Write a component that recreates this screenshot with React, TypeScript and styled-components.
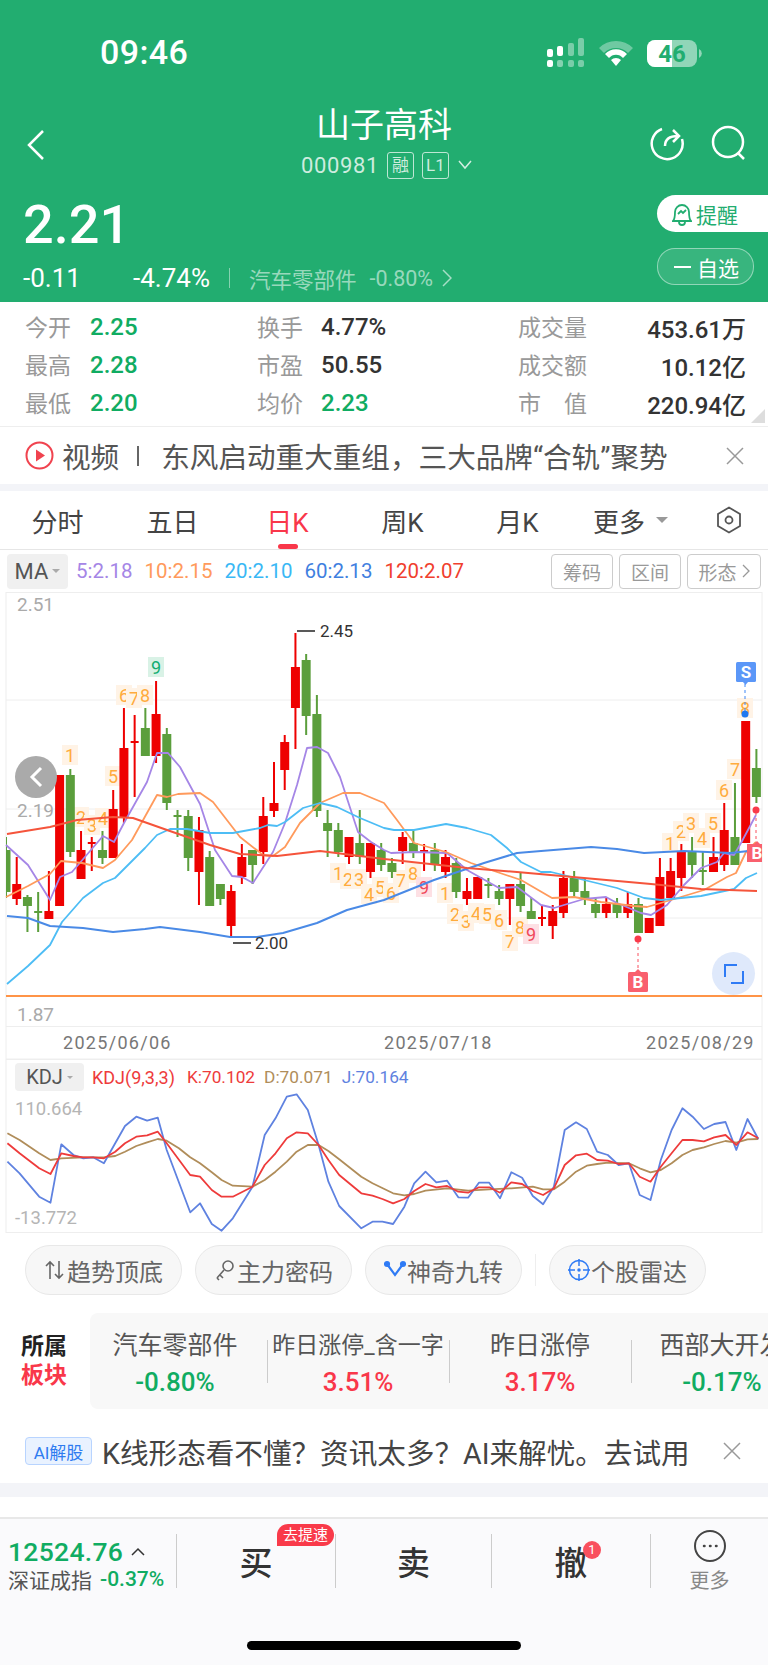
import React from 'react';
import styled, { createGlobalStyle } from 'styled-components';

const GlobalStyle = createGlobalStyle`
    html, body { margin: 0; padding: 0; background: #fff; }
    body { font-family: Roboto, "Noto Sans CJK SC", sans-serif; }
`;

const GREEN = '#22ad70';
const UP = '#f9374a';
const DOWN = '#10ac62';

const Page = styled.div`
    width: 768px;
    height: 1665px;
    overflow: hidden;
    display: flex;
    flex-direction: column;
    background: #fff;
`;

/* header */
const Header = styled.header`
    height: 302px;
    flex: none;
    background: ${GREEN};
    color: #fff;
`;
const StatusBar = styled.div`
    height: 104px;
    display: flex;
    align-items: center;
    justify-content: space-between;
    padding: 0 66px 0 100px;
`;
const Clock = styled.span`
    font-size: 34px;
    font-weight: 500;
    letter-spacing: 0.4px;
`;
const Nav = styled.div`
    height: 82px;
    display: grid;
    grid-template-columns: 1fr auto 1fr;
    padding: 0 21px 0 27px;
    align-items: center;
`;
const NavIcons = styled.div`
    display: flex;
    gap: 26px;
    justify-content: flex-end;
    margin-top: -4px;
`;
const TitleBlock = styled.div`
    display: flex;
    flex-direction: column;
    align-items: center;
    height: 82px;
`;
const Title = styled.div`
    font-size: 34px;
    line-height: 38px;
    margin: 2px 6px 0 0;
`;
const CodeRow = styled.div`
    display: flex;
    align-items: center;
    gap: 8px;
    margin-top: 6px;
    height: 30px;
    font-size: 22px;
    color: rgba(255, 255, 255, 0.78);
    letter-spacing: 0.6px;
`;
const Tag = styled.span`
    font-size: 17px;
    line-height: 25px;
    height: 25px;
    width: 25px;
    text-align: center;
    border: 1px solid rgba(255, 255, 255, 0.7);
    border-radius: 3px;
    letter-spacing: 0;
`;
const PriceArea = styled.div`
    display: flex;
    justify-content: space-between;
    height: 116px;
`;
const PriceLeft = styled.div`
    padding: 9px 0 0 23px;
`;
const Price = styled.div`
    font-size: 54px;
    line-height: 60px;
    font-weight: 500;
`;
const SubRow = styled.div`
    display: flex;
    align-items: center;
    height: 28px;
    margin-top: 9px;
    font-size: 26px;
`;
const Change = styled.span<{ $w: number }>`
    width: ${p => p.$w}px;
`;
const SubDivider = styled.span`
    width: 1px;
    height: 20px;
    margin: 0 19px;
    background: rgba(255, 255, 255, 0.45);
`;
const SubLink = styled.span`
    display: flex;
    align-items: center;
    font-size: 21.5px;
    color: rgba(255, 255, 255, 0.55);
    gap: 13px;
`;
const PriceButtons = styled.div`
    width: 111px;
    padding-top: 9px;
    display: flex;
    flex-direction: column;
    gap: 16px;
`;
const RemindButton = styled.div`
    height: 37px;
    background: #fff;
    border-radius: 19px 0 0 19px;
    color: ${GREEN};
    font-size: 21px;
    display: flex;
    align-items: center;
    gap: 4px;
    padding-left: 15px;
`;
const WatchButton = styled.div`
    height: 35px;
    border: 1px solid rgba(255, 255, 255, 0.45);
    background: rgba(255, 255, 255, 0.1);
    border-radius: 18px;
    font-size: 21px;
    display: flex;
    align-items: center;
    gap: 6px;
    padding-left: 16px;
    width: 79px;
`;
const Dash = styled.span`
    width: 17px;
    height: 2px;
    background: #fff;
`;

/* quote stats */
const Stats = styled.section`
    position: relative;
    height: 125px;
    flex: none;
    display: grid;
    grid-template-columns: 232px 261px 228px;
    grid-auto-rows: 38px;
    padding: 6px 0 0 25px;
    box-sizing: border-box;
    border-bottom: 1px solid #eee;
`;
const Stat = styled.div`
    display: flex;
    align-items: center;
    font-size: 24px;
`;
const StatLabel = styled.span<{ $w: number; $spread?: boolean }>`
    width: ${p => p.$w}px;
    color: #999;
    font-size: 23px;
    margin-top: -3px;
    display: flex;
    justify-content: ${p => (p.$spread ? 'space-between' : 'flex-start')};
`;
const StatValue = styled.span<{ $color: string; $right?: boolean }>`
    flex: 1;
    color: ${p => p.$color};
    font-weight: 500;
    text-align: ${p => (p.$right ? 'right' : 'left')};
`;
const Corner = styled.span`
    position: absolute;
    right: 3px;
    bottom: 3px;
    border-style: solid;
    border-width: 0 0 14px 14px;
    border-color: transparent transparent #ddd transparent;
`;

/* news banner */
const Banner = styled.div`
    height: 57px;
    flex: none;
    display: flex;
    align-items: center;
    padding: 0 24px 0 25px;
    font-size: 28.6px;
    color: #555;
    white-space: nowrap;
`;
const BannerLabel = styled.span`
    margin-left: 8px;
`;
const BannerText = styled.span`
    flex: 1;
`;
const BannerSep = styled.span`
    width: 2px;
    height: 20px;
    margin: 0 22px 0 18px;
    background: #666;
`;
const Band = styled.div<{ $h: number }>`
    height: ${p => p.$h}px;
    flex: none;
    background: #f3f4f8;
`;

/* period tabs */
const Tabs = styled.nav`
    height: 59px;
    flex: none;
    display: flex;
    align-items: center;
    box-sizing: border-box;
    border-bottom: 1px solid #e6e6e6;
`;
const Tab = styled.div<{ $active?: boolean }>`
    position: relative;
    width: 115px;
    height: 58px;
    display: flex;
    align-items: center;
    justify-content: center;
    font-size: 26px;
    color: ${p => (p.$active ? UP : '#444')};
    &::after {
        content: '';
        display: ${p => (p.$active ? 'block' : 'none')};
        position: absolute;
        left: 50%;
        margin-left: -10px;
        bottom: 0;
        width: 20px;
        height: 5px;
        border-radius: 3px;
        background: ${UP};
    }
`;
const MoreTab = styled(Tab)`
    justify-content: flex-start;
    padding-left: 18px;
    box-sizing: border-box;
    gap: 11px;
`;
const Caret = styled.span<{ $size: number; $color: string }>`
    border-style: solid;
    border-width: ${p => p.$size}px ${p => p.$size}px 0;
    border-color: ${p => p.$color} transparent transparent;
`;
const TabIcon = styled.div`
    margin-left: 26px;
    display: flex;
`;

/* MA legend */
const LegendRow = styled.div`
    height: 42px;
    flex: none;
    display: flex;
    align-items: center;
    padding-left: 7px;
    padding-right: 7px;
    box-sizing: border-box;
`;
const Selector = styled.div<{ $w: number; $h: number; $size: number }>`
    width: ${p => p.$w}px;
    height: ${p => p.$h}px;
    flex: none;
    background: #f0f0f0;
    border-radius: 4px;
    display: flex;
    align-items: center;
    justify-content: center;
    gap: 4px;
    font-size: ${p => p.$size}px;
    color: #555;
`;
const Legend = styled.span<{ $color: string; $gap: number; $size: number }>`
    color: ${p => p.$color};
    font-size: ${p => p.$size}px;
    margin-left: ${p => p.$gap}px;
    white-space: nowrap;
`;
const ToolButtons = styled.div`
    margin-left: auto;
    display: flex;
    gap: 6px;
`;
const ToolButton = styled.div<{ $w: number }>`
    width: ${p => p.$w}px;
    height: 35px;
    box-sizing: border-box;
    border: 1px solid #ccc;
    border-radius: 4px;
    display: flex;
    align-items: center;
    justify-content: center;
    gap: 5px;
    font-size: 19px;
    color: #999;
`;

/* charts */
const ChartWrap = styled.div`
    position: relative;
    height: 467px;
    flex: none;
`;
const ChartSvg = styled.svg`
    display: block;
    font-family: Roboto, sans-serif;
`;
const RoundBack = styled.div`
    position: absolute;
    left: 15px;
    top: 164px;
    width: 42px;
    height: 42px;
    border-radius: 50%;
    background: #aaa;
    display: flex;
    align-items: center;
    justify-content: center;
`;
const RoundExpand = styled.div`
    position: absolute;
    left: 712px;
    top: 360px;
    width: 43px;
    height: 43px;
    border-radius: 50%;
    background: #dfe9fb;
    display: flex;
    align-items: center;
    justify-content: center;
`;
const KdjWrap = styled.div`
    position: relative;
    height: 174px;
    flex: none;
`;
const KdjHead = styled.div`
    position: absolute;
    left: 15px;
    top: 4px;
    display: flex;
    align-items: center;
`;

/* indicator chips */
const Chips = styled.div`
    height: 80px;
    flex: none;
    display: flex;
    align-items: center;
    padding: 0 0 6px 25px;
    box-sizing: border-box;
    gap: 13px;
`;
const Chip = styled.div`
    width: 157px;
    height: 50px;
    box-sizing: border-box;
    background: #f7f7f7;
    border: 1px solid #e8e8e8;
    border-radius: 25px;
    display: flex;
    align-items: center;
    justify-content: center;
    gap: 1px;
    font-size: 24px;
    color: #666;
`;
const ChipDivider = styled.span`
    width: 1px;
    height: 32px;
    background: #eee;
`;

/* sector row */
const SectorRow = styled.div`
    height: 96px;
    flex: none;
    display: flex;
    align-items: center;
`;
const SectorLabel = styled.div`
    width: 90px;
    padding-left: 21px;
    box-sizing: border-box;
    font-size: 23px;
    font-weight: 700;
    line-height: 29px;
    color: #222;
`;
const RedText = styled.div`
    color: ${UP};
`;
const SectorPanel = styled.div`
    flex: 1;
    height: 96px;
    display: flex;
    overflow: hidden;
    background: #f8f8f8;
    border-radius: 8px 0 0 8px;
`;
const SectorItem = styled.div<{ $w: number; $line?: boolean; $inset?: number }>`
    position: relative;
    width: ${p => p.$w}px;
    flex: none;
    display: flex;
    flex-direction: column;
    align-items: center;
    white-space: nowrap;
    padding: 17px ${p => p.$inset || 0}px 0 0;
    box-sizing: border-box;
    &::before {
        content: '';
        display: ${p => (p.$line ? 'block' : 'none')};
        position: absolute;
        left: 0;
        top: 27px;
        width: 1px;
        height: 43px;
        background: #ccc;
    }
`;
const SectorName = styled.div<{ $size: number }>`
    font-size: ${p => p.$size}px;
    line-height: 32px;
    color: #555;
`;
const SectorValue = styled.div<{ $color: string }>`
    font-size: 26px;
    line-height: 30px;
    margin-top: 5px;
    font-weight: 500;
    color: ${p => p.$color};
`;

/* ai tip */
const AiRow = styled.div`
    height: 74px;
    flex: none;
    display: flex;
    align-items: center;
    padding: 10px 27px 0 25px;
    box-sizing: border-box;
`;
const AiBadge = styled.span`
    width: 67px;
    height: 28px;
    flex: none;
    box-sizing: border-box;
    background: #e9f2ff;
    border: 1px solid #b8d4ff;
    border-radius: 4px;
    color: #2f7bf0;
    font-size: 17px;
    display: flex;
    align-items: center;
    justify-content: center;
`;
const AiText = styled.span`
    flex: 1;
    margin-left: 10px;
    font-size: 28.6px;
    color: #444;
    white-space: nowrap;
`;

/* footer */
const Spacer = styled.div`
    height: 20px;
    flex: none;
`;
const Footer = styled.footer`
    flex: 1;
    position: relative;
    background: #fafafc;
    border-top: 2px solid #e8e8e8;
    padding-top: 15px;
`;
const FooterRow = styled.div`
    display: flex;
    height: 54px;
`;
const IndexCell = styled.div`
    width: 176px;
    padding-left: 8px;
    box-sizing: border-box;
    white-space: nowrap;
`;
const IndexValue = styled.div`
    display: flex;
    align-items: center;
    gap: 8px;
    height: 28px;
    margin-top: 3px;
    color: ${DOWN};
    font-size: 26.5px;
    font-weight: 500;
    letter-spacing: 0.3px;
`;
const IndexName = styled.div`
    display: flex;
    align-items: center;
    height: 30px;
    margin-top: -1px;
    gap: 8px;
    font-size: 21px;
    color: #555;
`;
const IndexPct = styled.span`
    color: ${DOWN};
    font-size: 21px;
    font-weight: 500;
`;
const Action = styled.div<{ $w: number }>`
    position: relative;
    width: ${p => p.$w}px;
    border-left: 1px solid #ccc;
    box-sizing: border-box;
    display: flex;
    align-items: center;
    justify-content: center;
    font-size: 33px;
    font-weight: 500;
    color: #333;
`;
const SpeedBadge = styled.span`
    position: absolute;
    left: 100px;
    top: -10px;
    width: 57px;
    height: 22px;
    background: #f93a4a;
    border-radius: 11px 11px 11px 0;
    color: #fff;
    font-size: 15px;
    font-weight: 400;
    text-align: center;
    line-height: 22px;
`;
const CountBadge = styled.span`
    position: absolute;
    left: 91px;
    top: 7px;
    width: 18px;
    height: 18px;
    border-radius: 50%;
    background: #f9505e;
    color: #fff;
    font-size: 13px;
    font-weight: 400;
    text-align: center;
    line-height: 18px;
`;
const MoreCell = styled.div`
    flex: 1;
    border-left: 1px solid #ccc;
    display: flex;
    flex-direction: column;
    align-items: center;
    font-size: 20px;
    color: #888;
    line-height: 26px;
    gap: 6px;
    margin-top: 0;
    & > svg { flex: none; margin-top: -4px; }
`;
const HomeBar = styled.div`
    position: absolute;
    left: 247px;
    bottom: 15px;
    width: 274px;
    height: 9px;
    border-radius: 5px;
    background: #000;
`;

/* chart data, in page pixels */
type Candle = [number, number, number, number, number];
// dir (1 up/red, 0 down/green), wick top, body top, body bottom, wick bottom
const candles: Candle[] = [
    [0, 837, 850, 892, 898], [1, 857, 884, 899, 905], [0, 895, 897, 906, 932], [0, 892, 911, 913, 932], [1, 871, 911, 919, 919],
    [1, 775, 775, 906, 906], [0, 769, 775, 852, 857], [1, 831, 850, 879, 879], [1, 837, 842, 844, 871], [0, 831, 850, 858, 864],
    [1, 790, 809, 858, 858], [1, 708, 748, 818, 823], [1, 715, 741, 743, 797], [0, 708, 728, 756, 756], [1, 681, 714, 756, 763],
    [0, 728, 734, 803, 810], [0, 810, 815, 817, 837], [0, 810, 816, 858, 871], [1, 817, 830, 872, 905], [0, 851, 857, 906, 906],
    [0, 884, 884, 899, 905], [1, 885, 891, 926, 938], [1, 844, 857, 877, 884], [0, 850, 850, 865, 884], [1, 797, 816, 852, 864],
    [1, 762, 803, 811, 817], [1, 735, 742, 770, 790], [1, 633, 667, 708, 749], [0, 654, 660, 716, 735], [0, 695, 714, 811, 817],
    [0, 810, 823, 831, 857], [0, 823, 830, 852, 857], [1, 837, 837, 857, 864], [0, 810, 843, 857, 864], [1, 843, 843, 872, 878],
    [0, 843, 850, 865, 871], [0, 858, 863, 872, 878], [1, 832, 837, 851, 864], [0, 831, 843, 852, 858], [1, 844, 850, 852, 871],
    [0, 843, 850, 864, 871], [1, 850, 857, 872, 878], [0, 858, 863, 892, 898], [1, 878, 891, 899, 905], [1, 877, 877, 899, 899],
    [0, 878, 884, 886, 898], [0, 885, 891, 899, 905], [1, 884, 884, 899, 925], [0, 872, 884, 906, 912], [0, 898, 911, 919, 919],
    [1, 905, 917, 919, 926], [1, 905, 911, 926, 939], [1, 871, 878, 913, 918], [0, 871, 878, 892, 898], [0, 878, 891, 898, 905],
    [0, 898, 904, 913, 918], [1, 898, 904, 913, 918], [0, 898, 904, 913, 918], [1, 892, 904, 913, 918], [0, 898, 904, 933, 933],
    [1, 918, 918, 933, 933], [1, 858, 877, 926, 926], [1, 858, 871, 898, 898], [1, 844, 851, 878, 891], [0, 837, 851, 865, 878],
    [0, 851, 870, 872, 885], [1, 837, 857, 872, 872], [1, 803, 830, 865, 871], [0, 783, 837, 865, 865], [1, 721, 721, 843, 843],
    [0, 749, 768, 797, 803],
];

const ma5 = '6,845 28,865 50,900 60,877 72,872 103,836 114,842 124,823 147,782 157,753 168,753 180,767 200,804 215,850 232,876 242,877 253,883 273,852 285,823 297,785 307,748 317,747 328,753 340,777 358,832 371,842 384,850 391,853 414,852 447,853 467,870 499,888 517,887 541,905 554,908 584,899 606,897 617,903 641,913 651,915 667,905 684,885 701,868 717,862 724,853 734,855 741,843 756,815';
const ma10 = '6,897 28,886 50,874 61,861 82,863 103,868 115,860 132,840 157,795 167,797 178,794 200,793 213,802 240,837 263,855 273,856 285,847 300,823 320,803 343,793 360,793 384,803 397,820 414,843 446,852 471,863 497,872 521,880 552,898 574,897 601,902 634,906 647,907 671,900 704,890 727,877 736,873 746,852 756,842';
const ma20 = '7,984 28,966 50,945 62,922 83,898 103,883 115,878 145,848 157,835 170,829 187,829 210,833 233,833 260,828 268,825 277,826 285,822 303,808 320,803 337,807 360,818 384,828 394,830 414,830 446,824 467,828 491,835 507,848 521,862 541,872 551,872 584,880 617,888 644,898 661,900 701,896 734,889 746,878 757,873';
const ma60 = '7,916 28,918 50,926 83,928 113,932 145,929 160,927 200,932 230,937 257,937 283,933 317,923 347,910 384,900 434,880 484,863 517,853 541,851 591,847 617,849 644,853 684,851 731,853 757,850';
const ma120 = '7,834 50,827 77,820 113,817 133,818 167,830 210,845 240,854 277,856 320,851 384,859 467,868 517,872 584,878 651,884 701,889 757,891';

type Mark = [string, number, number];
const orangeMarks: Mark[] = [
    ['1', 70, 755], ['5', 113, 776], ['6', 124, 695], ['7', 134, 698], ['8', 145, 695], ['2', 81, 817], ['3', 92, 825], ['4', 103, 818],
    ['1', 338, 873], ['2', 348, 879], ['3', 359, 879], ['4', 369, 894], ['5', 380, 887], ['6', 391, 893], ['7', 401, 880], ['8', 413, 873],
    ['1', 445, 893], ['2', 455, 914], ['3', 466, 921], ['4', 476, 913], ['5', 487, 914], ['6', 499, 920], ['7', 510, 941], ['8', 520, 927],
    ['1', 670, 843], ['2', 681, 831], ['3', 691, 823], ['4', 702, 838], ['5', 713, 823], ['6', 724, 790], ['7', 735, 769], ['8', 745, 708],
];
const pinkMarks: Mark[] = [['9', 424, 887], ['9', 531, 934]];

const kdjJ = '15,335 40,370 80,440 103,458 125,283 150,315 170,325 190,322 212,340 235,280 255,228 278,200 300,212 322,203 340,300 388,487 408,460 432,522 452,542 475,505 515,410 540,255 562,205 585,140 605,133 628,180 650,285 670,395 692,468 737,535 760,515 780,515 802,522 825,470 845,400 868,365 890,397 912,392 935,442 955,443 977,398 998,398 1020,445 1043,367 1065,383 1087,438 1108,463 1130,410 1152,240 1175,217 1197,237 1218,305 1240,315 1262,345 1283,340 1305,435 1327,450 1348,330 1370,240 1392,175 1413,200 1436,237 1457,222 1480,216 1502,300 1525,207 1547,267';
const kdjK = '15,280 40,310 80,355 103,372 125,310 150,318 170,322 190,322 212,325 235,305 255,280 278,260 300,256 322,245 340,280 388,375 408,380 432,420 452,440 475,440 515,410 540,345 562,310 585,265 605,247 628,250 650,285 670,330 692,375 737,430 760,437 780,447 802,460 825,447 845,423 868,402 890,412 912,408 935,425 955,428 977,412 998,412 1020,428 1043,397 1065,402 1087,423 1108,435 1130,415 1152,345 1175,316 1197,311 1218,330 1240,332 1262,342 1283,340 1305,380 1327,395 1348,350 1370,310 1392,270 1413,270 1436,274 1457,262 1480,255 1502,285 1525,247 1547,265';
const kdjD = '15,250 40,270 80,310 103,330 125,325 170,322 212,322 235,318 255,305 278,288 300,277 322,267 340,272 365,295 388,322 408,340 432,367 452,390 475,407 515,410 540,390 562,365 585,335 605,305 628,285 650,285 670,303 692,328 737,380 760,400 802,430 825,436 845,432 868,422 912,415 955,422 998,418 1043,415 1087,410 1108,418 1130,418 1152,395 1175,365 1197,347 1218,342 1240,338 1283,340 1305,355 1327,367 1348,360 1370,340 1392,315 1413,300 1436,292 1457,282 1480,273 1502,278 1525,268 1547,267';

// kdj points were read off a crop stretched 2.04x / 3x
const kdjPoints = (s: string) =>
    s.split(' ').map(p => {
        const [x, y] = p.split(',').map(Number);
        return `${(x / 2.04).toFixed(1)},${(y / 3 + 1050 - 1059).toFixed(1)}`;
    }).join(' ');

const MarkBox = ({ m, bg, color }: { m: Mark; bg: string; color: string }) => (
    <g>
        <rect x={m[1] - 8} y={m[2] - 10} width={16} height={20} fill={bg} />
        <text x={m[1]} y={m[2] + 6.5} fontSize={18} textAnchor="middle" fill={color}>{m[0]}</text>
    </g>
);

const KChart = () => (
    <ChartSvg width={768} height={467} viewBox="0 592 768 467">
        <defs>
            <clipPath id="plot">
                <rect x={6} y={592} width={756} height={434} />
            </clipPath>
        </defs>
        <rect x={6} y={592.5} width={756} height={434} fill="none" stroke="#eee" />
        <line x1={6} x2={762} y1={700} y2={700} stroke="#eee" />
        <line x1={6} x2={762} y1={809} y2={809} stroke="#eee" />
        <line x1={6} x2={762} y1={918} y2={918} stroke="#eee" />
        <line x1={6} x2={762} y1={996} y2={996} stroke="#ff9447" strokeWidth={2} />
        <line x1={6} x2={6} y1={1027} y2={1059} stroke="#eee" />
        <line x1={762} x2={762} y1={1027} y2={1059} stroke="#eee" />
        <line x1={6} x2={762} y1={1059} y2={1059} stroke="#eee" />

        <text x={17} y={611} fontSize={19} fill="#aaa">2.51</text>
        <text x={17} y={817} fontSize={19} fill="#aaa">2.19</text>
        <text x={17} y={1021} fontSize={19} fill="#aaa">1.87</text>
        <text x={63} y={1049} fontSize={18} letterSpacing={1.3} fill="#777">2025/06/06</text>
        <text x={384} y={1049} fontSize={18} letterSpacing={1.3} fill="#777">2025/07/18</text>
        <text x={646} y={1049} fontSize={18} letterSpacing={1.3} fill="#777">2025/08/29</text>

        {orangeMarks.map((m, i) => <MarkBox key={i} m={m} bg="#fff3e6" color="#ffab3d" />)}
        {pinkMarks.map((m, i) => <MarkBox key={i} m={m} bg="#fde0e4" color="#f0485a" />)}
        <MarkBox m={['9', 156, 667]} bg="#d9f2e6" color="#12ad72" />

        <g clipPath="url(#plot)">
            {candles.map((c, i) => {
                const x = 6 + i * 10.72;
                const fill = c[0] ? '#ee0000' : '#5b9e3c';
                return (
                    <g key={i} fill={fill}>
                        <rect x={x - 1} y={c[1]} width={2} height={c[4] - c[1]} />
                        {c[3] - c[2] <= 2
                            ? <rect x={x - 4} y={c[2]} width={8} height={2} />
                            : <rect x={x - 4.5} y={c[2]} width={9} height={c[3] - c[2]} />}
                    </g>
                );
            })}
        </g>

        <g fill="none" strokeWidth={1.8} strokeLinejoin="round">
            <polyline points={ma5} stroke="#a586e6" />
            <polyline points={ma10} stroke="#ff9a5c" />
            <polyline points={ma20} stroke="#4dbdf5" />
            <polyline points={ma60} stroke="#4a8ae6" strokeWidth={2} />
            <polyline points={ma120} stroke="#f5543b" strokeWidth={2} />
        </g>

        <line x1={297} x2={315} y1={631} y2={631} stroke="#222" strokeWidth={1.5} />
        <text x={320} y={637} fontSize={17} fill="#333">2.45</text>
        <line x1={233} x2={251} y1={943} y2={943} stroke="#222" strokeWidth={1.5} />
        <text x={255} y={949} fontSize={17} fill="#333">2.00</text>

        <line x1={745} x2={745} y1={684} y2={712} stroke="#3f87f5" strokeDasharray="3 3" />
        <circle cx={745} cy={714} r={3.5} fill="#1f78f0" />
        <rect x={736} y={662} width={20} height={20} rx={1.5} fill="#5b97f8" />
        <path d="M743 682h5l-2.500 3z" fill="#5b97f8" />
        <text x={746} y={678} fontSize={17} fontWeight={700} textAnchor="middle" fill="#fff">S</text>

        <line x1={756} x2={756} y1={812} y2={842} stroke="#f9505e" strokeDasharray="3 3" />
        <circle cx={756} cy={810} r={3.5} fill="#f93a4a" />
        <g clipPath="url(#plot)">
            <rect x={747} y={844} width={20} height={18} fill="#f9606e" />
            <path d="M754 844h6l-3-3z" fill="#f9606e" />
            <text x={757} y={859} fontSize={17} fontWeight={700} textAnchor="middle" fill="#fff">B</text>
        </g>

        <line x1={638} x2={638} y1={941} y2={971} stroke="#f9505e" strokeDasharray="3 3" />
        <circle cx={638} cy={939} r={3.5} fill="#f93a4a" />
        <rect x={628} y={972} width={20} height={20} rx={1.5} fill="#f9606e" />
        <path d="M635 972h6l-3-3z" fill="#f9606e" />
        <text x={638} y={988} fontSize={17} fontWeight={700} textAnchor="middle" fill="#fff">B</text>
    </ChartSvg>
);

const KdjChart = () => (
    <ChartSvg width={768} height={174} viewBox="0 0 768 174">
        <rect x={6} y={0.5} width={756} height={173} fill="none" stroke="#eee" />
        <text x={15} y={56} fontSize={18.5} fill="#b5b5b5">110.664</text>
        <text x={15} y={165} fontSize={18.5} fill="#b5b5b5">-13.772</text>
        <g fill="none" strokeWidth={1.8} strokeLinejoin="round">
            <polyline points={kdjPoints(kdjD)} stroke="#b08d5a" />
            <polyline points={kdjPoints(kdjJ)} stroke="#5f82e0" />
            <polyline points={kdjPoints(kdjK)} stroke="#ee3b3b" />
        </g>
    </ChartSvg>
);

const App = () => (
    <Page>
        <GlobalStyle />
        <Header>
            <StatusBar>
                <Clock>09:46</Clock>
                <svg width="155" height="30" viewBox="0 0 155 30">
                    <g fill="#fff">
                        <rect x="0" y="12" width="6" height="8" rx="2" />
                        <rect x="10" y="9" width="6" height="10" rx="2" />
                        <rect x="0" y="23" width="6" height="7" rx="2" />
                        <rect x="10" y="23" width="6" height="7" rx="2" opacity=".45" />
                    </g>
                    <g fill="#fff" opacity=".4">
                        <rect x="21" y="6" width="6" height="13" rx="2" />
                        <rect x="31" y="1" width="6" height="18" rx="2" />
                        <rect x="21" y="23" width="6" height="7" rx="2" />
                        <rect x="31" y="23" width="6" height="7" rx="2" />
                    </g>
                    <path d="M52 11a24 24 0 0 1 34 0l-5 5a17 17 0 0 0-24 0z" fill="#fff" opacity=".35" />
                    <path d="M58 17a15 15 0 0 1 22 0l-4 4a9 9 0 0 0-14 0z" fill="#fff" />
                    <path d="M64 23a7 7 0 0 1 10 0l-5 6z" fill="#fff" />
                    <rect x="100" y="3" width="50" height="27" rx="8" fill="#fff" opacity=".5" />
                    <path d="M108 3h17v27h-17a8 8 0 0 1-8-8v-11a8 8 0 0 1 8-8z" fill="#fff" />
                    <path d="M152 12a5 5 0 0 1 0 9z" fill="#fff" opacity=".5" />
                    <text x="125" y="25" textAnchor="middle" fontSize="24" fontWeight="700" fill={GREEN} fontFamily="Roboto, sans-serif">46</text>
                </svg>
            </StatusBar>
            <Nav>
                <svg width="18" height="32" viewBox="0 0 18 32" fill="none" stroke="#fff" strokeWidth="2.500">
                    <path d="M16 2 2 16l14 14" />
                </svg>
                <TitleBlock>
                    <Title>山子高科</Title>
                    <CodeRow>
                        000981
                        <Tag>融</Tag>
                        <Tag>L1</Tag>
                        <svg width="16" height="10" viewBox="0 0 16 10" fill="none" stroke="#fff" strokeOpacity=".8" strokeWidth="1.500">
                            <path d="m2 1 6 7 6-7" />
                        </svg>
                    </CodeRow>
                </TitleBlock>
                <NavIcons>
                    <svg width="36" height="36" viewBox="0 0 36 36" fill="none" stroke="#fff" strokeWidth="2.500">
                        <path d="M13 4a15.500 15.500 0 1 0 20 10" />
                        <path d="M16 21c0-7 4-10 13-10M24 5l6 6-6 6" />
                    </svg>
                    <svg width="36" height="36" viewBox="0 0 36 36" fill="none" stroke="#fff" strokeWidth="2.500">
                        <circle cx="17" cy="17" r="15" />
                        <path d="m27 28 6 6" />
                    </svg>
                </NavIcons>
            </Nav>
            <PriceArea>
                <PriceLeft>
                    <Price>2.21</Price>
                    <SubRow>
                        <Change $w={110}>-0.11</Change>
                        <span>-4.74%</span>
                        <SubDivider />
                        <SubLink>
                            汽车零部件
                            <span>-0.80%</span>
                            <svg width="10" height="18" viewBox="0 0 10 18" fill="none" stroke="#fff" strokeOpacity=".6" strokeWidth="1.500" style={{ marginLeft: -4 }}>
                                <path d="m1 1 8 8-8 8" />
                            </svg>
                        </SubLink>
                    </SubRow>
                </PriceLeft>
                <PriceButtons>
                    <RemindButton>
                        <svg width="20" height="24" viewBox="0 0 20 24" fill="none" stroke={GREEN} strokeWidth="1.800">
                            <path d="M1 19c2-2 2-4 2-9a7 7 0 0 1 14 0c0 5 0 7 2 9z" />
                            <path d="M7 20c0 4 6 4 6 0M6 12l3-3 2 2 3-3" />
                        </svg>
                        提醒
                    </RemindButton>
                    <WatchButton><Dash />自选</WatchButton>
                </PriceButtons>
            </PriceArea>
        </Header>

        <Stats>
            <Stat><StatLabel $w={65}>今开</StatLabel><StatValue $color={DOWN}>2.25</StatValue></Stat>
            <Stat><StatLabel $w={64}>换手</StatLabel><StatValue $color="#333">4.77%</StatValue></Stat>
            <Stat><StatLabel $w={69}>成交量</StatLabel><StatValue $color="#333" $right>453.61万</StatValue></Stat>
            <Stat><StatLabel $w={65}>最高</StatLabel><StatValue $color={DOWN}>2.28</StatValue></Stat>
            <Stat><StatLabel $w={64}>市盈</StatLabel><StatValue $color="#333">50.55</StatValue></Stat>
            <Stat><StatLabel $w={69}>成交额</StatLabel><StatValue $color="#333" $right>10.12亿</StatValue></Stat>
            <Stat><StatLabel $w={65}>最低</StatLabel><StatValue $color={DOWN}>2.20</StatValue></Stat>
            <Stat><StatLabel $w={64}>均价</StatLabel><StatValue $color={DOWN}>2.23</StatValue></Stat>
            <Stat><StatLabel $w={69} $spread><span>市</span><span>值</span></StatLabel><StatValue $color="#333" $right>220.94亿</StatValue></Stat>
            <Corner />
        </Stats>

        <Banner>
            <svg width="29" height="29" viewBox="0 0 29 29" style={{ flex: 'none' }}>
                <circle cx="14.500" cy="14.500" r="13" fill="none" stroke="#f0434f" strokeWidth="2" />
                <path d="M11 8.500v12l9-6z" fill="#f0434f" />
            </svg>
            <BannerLabel>视频</BannerLabel>
            <BannerSep />
            <BannerText>东风启动重大重组，三大品牌“合轨”聚势</BannerText>
            <svg width="18" height="18" viewBox="0 0 18 18" fill="none" stroke="#999" strokeWidth="1.500" style={{ flex: 'none' }}>
                <path d="m1 1 16 16M17 1 1 17" />
            </svg>
        </Banner>
        <Band $h={7} />

        <Tabs>
            <Tab>分时</Tab>
            <Tab>五日</Tab>
            <Tab $active>日K</Tab>
            <Tab>周K</Tab>
            <Tab>月K</Tab>
            <MoreTab>更多<Caret $size={6} $color="#999" /></MoreTab>
            <TabIcon>
                <svg width="26" height="28" viewBox="0 0 26 28" fill="none" stroke="#555" strokeWidth="1.800">
                    <path d="M13 1.500 24 8v12l-11 6.500L2 20V8z" />
                    <circle cx="13" cy="14" r="3.500" />
                </svg>
            </TabIcon>
        </Tabs>

        <LegendRow>
            <Selector $w={61} $h={35} $size={22}>MA<Caret $size={4} $color="#aaa" /></Selector>
            <Legend $color="#a586e6" $gap={8} $size={20.5}>5:2.18</Legend>
            <Legend $color="#ff9a5c" $gap={12} $size={20.5}>10:2.15</Legend>
            <Legend $color="#3ab8f5" $gap={12} $size={20.5}>20:2.10</Legend>
            <Legend $color="#3f80e0" $gap={12} $size={20.5}>60:2.13</Legend>
            <Legend $color="#f0402e" $gap={12} $size={20.5}>120:2.07</Legend>
            <ToolButtons>
                <ToolButton $w={62}>筹码</ToolButton>
                <ToolButton $w={62}>区间</ToolButton>
                <ToolButton $w={74}>
                    形态
                    <svg width="8" height="14" viewBox="0 0 8 14" fill="none" stroke="#999" strokeWidth="1.300">
                        <path d="m1 1 6 6-6 6" />
                    </svg>
                </ToolButton>
            </ToolButtons>
        </LegendRow>

        <ChartWrap>
            <KChart />
            <RoundBack>
                <svg width="14" height="22" viewBox="0 0 14 22" fill="none" stroke="#fff" strokeWidth="3">
                    <path d="M12 2 3 11l9 9" />
                </svg>
            </RoundBack>
            <RoundExpand>
                <svg width="20" height="20" viewBox="0 0 20 20" fill="none" stroke="#2f7bf5" strokeWidth="2">
                    <path d="M13 1H1v12M7 19h12V7" />
                </svg>
            </RoundExpand>
        </ChartWrap>

        <KdjWrap>
            <KdjChart />
            <KdjHead>
                <Selector $w={69} $h={28} $size={20}>KDJ<Caret $size={3} $color="#aaa" /></Selector>
                <Legend $color="#ee3b3b" $gap={8} $size={18}>KDJ(9,3,3)</Legend>
                <Legend $color="#ee3b3b" $gap={12} $size={17.3}>K:70.102</Legend>
                <Legend $color="#b08d5a" $gap={9} $size={17.3}>D:70.071</Legend>
                <Legend $color="#5f82e0" $gap={9} $size={17.3}>J:70.164</Legend>
            </KdjHead>
        </KdjWrap>

        <Chips>
            <Chip>
                <svg width="22" height="22" viewBox="0 0 22 22" fill="none" stroke="#666" strokeWidth="1.600">
                    <path d="M6 20V3M2 7l4-4 4 4M15 2v17M11 15l4 4 4-4" />
                </svg>
                趋势顶底
            </Chip>
            <Chip>
                <svg width="22" height="22" viewBox="0 0 22 22" fill="none" stroke="#666" strokeWidth="1.600">
                    <circle cx="14" cy="7" r="5" />
                    <path d="M10 11 3 19M6 16l3 3M3 19l2 2" />
                </svg>
                主力密码
            </Chip>
            <Chip>
                <svg width="22" height="20" viewBox="0 0 22 20" fill="none" stroke="#2f7bf5" strokeWidth="2.200">
                    <path d="m3 4 8 11 8-11" />
                    <circle cx="3" cy="4" r="2" fill="#2f7bf5" />
                    <circle cx="19" cy="4" r="2" fill="#2f7bf5" />
                </svg>
                神奇九转
            </Chip>
            <ChipDivider />
            <Chip>
                <svg width="22" height="24" viewBox="0 0 22 24" fill="none" stroke="#2f7bf5" strokeWidth="1.500">
                    <circle cx="11" cy="12" r="9.500" />
                    <path d="M11 1v7M11 16v7M0 12h7M15 12h7" />
                    <circle cx="11" cy="12" r="1" fill="#2f7bf5" />
                </svg>
                个股雷达
            </Chip>
        </Chips>

        <SectorRow>
            <SectorLabel>所属<RedText>板块</RedText></SectorLabel>
            <SectorPanel>
                <SectorItem $w={177} $inset={7}>
                    <SectorName $size={25}>汽车零部件</SectorName>
                    <SectorValue $color={DOWN}>-0.80%</SectorValue>
                </SectorItem>
                <SectorItem $w={182} $line>
                    <SectorName $size={23}>昨日涨停_含一字</SectorName>
                    <SectorValue $color={UP}>3.51%</SectorValue>
                </SectorItem>
                <SectorItem $w={182} $line>
                    <SectorName $size={25}>昨日涨停</SectorName>
                    <SectorValue $color={UP}>3.17%</SectorValue>
                </SectorItem>
                <SectorItem $w={182} $line>
                    <SectorName $size={25}>西部大开发</SectorName>
                    <SectorValue $color={DOWN}>-0.17%</SectorValue>
                </SectorItem>
            </SectorPanel>
        </SectorRow>

        <AiRow>
            <AiBadge>AI解股</AiBadge>
            <AiText>K线形态看不懂？资讯太多？AI来解忧。去试用</AiText>
            <svg width="18" height="18" viewBox="0 0 18 18" fill="none" stroke="#999" strokeWidth="1.500" style={{ flex: 'none' }}>
                <path d="m1 1 16 16M17 1 1 17" />
            </svg>
        </AiRow>
        <Band $h={14} />
        <Spacer />

        <Footer>
            <FooterRow>
                <IndexCell>
                    <IndexValue>
                        12524.76
                        <svg width="14" height="9" viewBox="0 0 14 9" fill="none" stroke="#333" strokeWidth="1.500">
                            <path d="m1 8 6-6 6 6" />
                        </svg>
                    </IndexValue>
                    <IndexName>深证成指<IndexPct>-0.37%</IndexPct></IndexName>
                </IndexCell>
                <Action $w={159}>买<SpeedBadge>去提速</SpeedBadge></Action>
                <Action $w={156}>卖</Action>
                <Action $w={159}>撤<CountBadge>1</CountBadge></Action>
                <MoreCell>
                    <svg width="32" height="32" viewBox="0 0 32 32" fill="none" stroke="#444" strokeWidth="2">
                        <circle cx="16" cy="16" r="15" />
                        <path d="M10 16h.5M16 16h.5M22 16h.5" strokeLinecap="round" strokeWidth="2.500" />
                    </svg>
                    更多
                </MoreCell>
            </FooterRow>
            <HomeBar />
        </Footer>
    </Page>
);

export default App;
